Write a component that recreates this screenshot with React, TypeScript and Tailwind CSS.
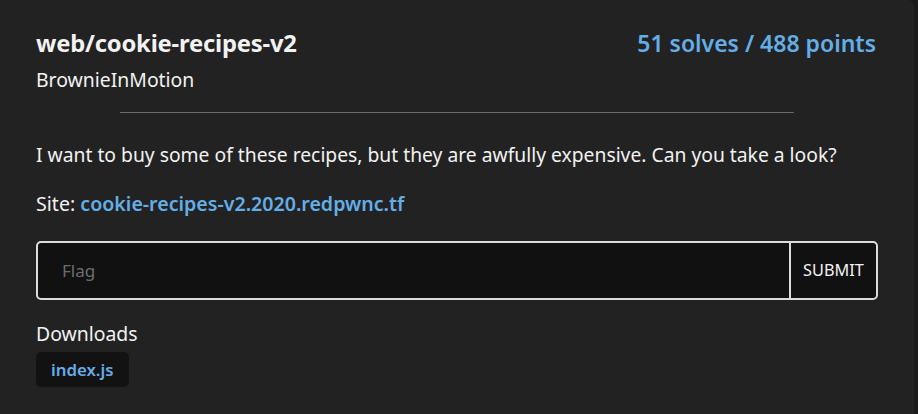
import { useState } from "react";

const App = () => {
  const [flag, setFlag] = useState("");
  return (
    <div
      className="w-[918px] h-[414px] bg-[#1b1b1b] overflow-hidden"
      style={{ fontFamily: '"Noto Sans", "Open Sans", sans-serif' }}
    >
      <div className="w-[914px] h-[414px] bg-[#222222] rounded-tr-[6px] px-9 pt-[26px] text-[#f2f2f2]">
        <div className="flex justify-between items-start">
          <div className="flex flex-col">
            <h1 className="text-[23.8px] font-bold leading-[34px] tracking-[-0.2px]">
              web/cookie-recipes-v2
            </h1>
            <p className="text-[19.4px] leading-[24px] mt-[8px]">
              BrownieInMotion
            </p>
          </div>
          <p className="text-[23px] font-semibold leading-[34px] text-[#64aee8] pr-[2px]">
            51 solves / 488 points
          </p>
        </div>
        <div className="w-[80%] mx-auto h-[1px] bg-[#6b6b6b] mt-[20px]" />
        <p className="text-[19.3px] leading-[24px] mt-[30px]">
          I want to buy some of these recipes, but they are awfully expensive.
          Can you take a look?
        </p>
        <p className="text-[19.6px] leading-[24px] mt-[25px]">
          Site:{" "}
          <a className="text-[#64aee8] font-semibold">
            cookie-recipes-v2.2020.redpwnc.tf
          </a>
        </p>
        <form
          className="flex mt-[25px] h-[59px] border-2 border-[#dcdcdc] rounded-[5px] bg-[#111111] overflow-hidden"
          onSubmit={(e) => e.preventDefault()}
        >
          <input
            className="flex-1 bg-transparent outline-0 border-0 px-6 text-[17px] text-[#f2f2f2] placeholder:text-[#6e6e6e]"
            placeholder="Flag"
            value={flag}
            onChange={(e) => setFlag(e.target.value)}
          />
          <button
            type="submit"
            className="w-[87px] border-l-2 border-[#dcdcdc] text-[16.3px] text-[#f2f2f2]"
          >
            SUBMIT
          </button>
        </form>
        <p className="text-[19.4px] leading-[24px] mt-[22px]">Downloads</p>
        <div className="mt-[6px]">
          <a className="inline-block bg-[#121212] rounded-[5px] px-[15px] py-[6px] text-[16.8px] leading-[23px] font-semibold text-[#64aee8]">
            index.js
          </a>
        </div>
      </div>
    </div>
  );
};

export default App;
